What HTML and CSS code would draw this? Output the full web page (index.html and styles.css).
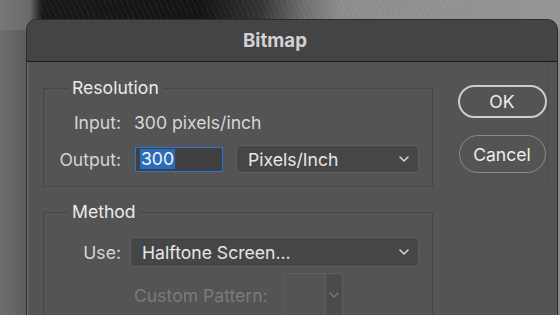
FILE: index.html
```html
<!DOCTYPE html>
<html lang="en">
<head>
  <meta charset="UTF-8">
  <title>Bitmap</title>
  <link rel="stylesheet" href="styles.css">
</head>
<body>
  <div class="dialog">
    <div class="dialog-title">Bitmap</div>
    <div class="dialog-body">
      <div class="dialog-main">
        <fieldset class="group group-resolution">
          <legend>Resolution</legend>
          <div class="row row-input">
            <span class="label">Input:</span>
            <span class="value">300 pixels/inch</span>
          </div>
          <div class="row row-output">
            <span class="label">Output:</span>
            <div class="text-field"><span class="selected">300</span></div>
            <div class="select select-units">
              <span>Pixels/Inch</span>
              <svg class="chevron" width="10" height="6" viewBox="0 0 10 6"><path d="M1 1l4 4 4-4" stroke="#d8d8d8" stroke-width="1.5" fill="none" stroke-linecap="round" stroke-linejoin="round"/></svg>
            </div>
          </div>
        </fieldset>
        <fieldset class="group group-method">
          <legend>Method</legend>
          <div class="row row-use">
            <span class="label">Use:</span>
            <div class="select select-method">
              <span>Halftone Screen...</span>
              <svg class="chevron" width="10" height="6" viewBox="0 0 10 6"><path d="M1 1l4 4 4-4" stroke="#d8d8d8" stroke-width="1.5" fill="none" stroke-linecap="round" stroke-linejoin="round"/></svg>
            </div>
          </div>
          <div class="row row-pattern">
            <span class="label-disabled">Custom Pattern:</span>
            <div class="pattern-box">
              <div class="pattern-swatch"></div>
              <div class="pattern-arrow">
                <svg width="10" height="6" viewBox="0 0 10 6"><path d="M1 1l4 4 4-4" stroke="#777" stroke-width="1.4" fill="none" stroke-linecap="round" stroke-linejoin="round"/></svg>
              </div>
            </div>
          </div>
        </fieldset>
      </div>
      <div class="dialog-buttons">
        <button class="btn btn-ok">OK</button>
        <button class="btn btn-cancel">Cancel</button>
      </div>
    </div>
  </div>
</body>
</html>
```

FILE: styles.css
```css
body {
  margin: 0;
  height: 315px;
  overflow: hidden;
  font-family: "Inter", "Liberation Sans", sans-serif;
  background:
    repeating-linear-gradient(65deg, rgba(255,255,255,0.05) 0 1px, transparent 1px 5px) 40px 0 / 420px 30px no-repeat,
    linear-gradient(90deg, #777 0, #6a6a6a 30px, #181818 42px, #141414 200px, #333 260px, #6a6a6a 300px, #8c8c8c 340px, #969696 100%) 0 0 / 100% 30px no-repeat,
    linear-gradient(90deg, #6e6e6e 0, #5c5c5c 26px, #8a8a8a 100%);
}
.dialog {
  margin: 19px 0 0 26px;
  width: 532px;
  height: 296px;
  box-sizing: border-box;
  background: #545454;
  border: 1px solid #2c2c2c;
  border-bottom: none;
  border-radius: 11px 11px 0 0;
  box-shadow: inset 1px 0 0 #6f6f6f;
  overflow: hidden;
}
.dialog-title {
  height: 41px;
  background: #444446;
  border-bottom: 1px solid #1c1c1c;
  display: flex;
  align-items: center;
  padding-left: 216px;
  font-size: 18.7px;
  font-weight: 700;
  color: #d2d2d2;
}
.dialog-body {
  display: flex;
  padding-left: 16px;
}
.dialog-main {
  width: 390px;
}
.group {
  margin: 0;
  padding: 0 0 13px 0;
  border: 1px solid #474747;
  min-inline-size: 0;
}
.group legend {
  margin-left: 24px;
  padding: 0 4px;
  font-size: 17.6px;
  line-height: 20px;
  color: #ebebeb;
}
.group-resolution {
  margin-top: 16px;
}
.group-method {
  margin-top: 15px;
  height: 140px;
}
.row {
  display: flex;
  align-items: center;
  gap: 13px;
  font-size: 17.6px;
  color: #d6d6d6;
}
.label {
  width: 77px;
  flex-shrink: 0;
  text-align: right;
}
.row-input {
  margin-top: 12px;
  height: 24px;
}
.row-output {
  margin-top: 11px;
  height: 28px;
}
.text-field {
  width: 88px;
  height: 25px;
  box-sizing: border-box;
  margin-left: 1px;
  border: 1.5px solid #2a74d8;
  background: #404040;
  display: flex;
  align-items: center;
  padding-left: 4px;
}
.selected {
  background: #2a6cba;
  color: #f4f4f4;
  line-height: 20px;
  padding: 0 1px;
}
.select {
  box-sizing: border-box;
  display: flex;
  align-items: center;
  justify-content: space-between;
  background: #464646;
  border: 1px solid #5e5e5e;
  border-radius: 5px;
  padding: 0 9px 0 11px;
  color: #e6e6e6;
}
.select-units {
  width: 183px;
  height: 28px;
}
.select-method {
  width: 289px;
  height: 30px;
}
.row-use {
  margin-top: 15px;
  gap: 9px;
}
.row-pattern {
  margin-top: 6px;
  padding-left: 90px;
  gap: 15px;
}
.label-disabled {
  color: #7b7b7b;
}
.pattern-box {
  width: 60px;
  height: 44px;
  box-sizing: border-box;
  display: flex;
  border: 1px solid #5e5e5e;
  border-radius: 5px;
  overflow: hidden;
}
.pattern-swatch {
  flex: 1;
}
.pattern-arrow {
  width: 16px;
  background: #4b4b4b;
  border-left: 1px solid #5e5e5e;
  display: flex;
  align-items: center;
  justify-content: center;
}
.dialog-buttons {
  display: flex;
  flex-direction: column;
  align-items: center;
  width: 90px;
  margin-left: 24px;
  padding-top: 23px;
  height: 95px;
  border-right: 1px solid #4a4a4a;
}
.btn {
  font-family: inherit;
  font-size: 17.6px;
  color: #ededed;
  background: transparent;
  border-radius: 20px;
  cursor: pointer;
}
.btn-ok {
  width: 89px;
  height: 33px;
  border: 2px solid #cdcdcd;
}
.btn-cancel {
  margin-top: 17px;
  width: 87px;
  height: 38px;
  border: 1px solid #8a8a8a;
}
```
